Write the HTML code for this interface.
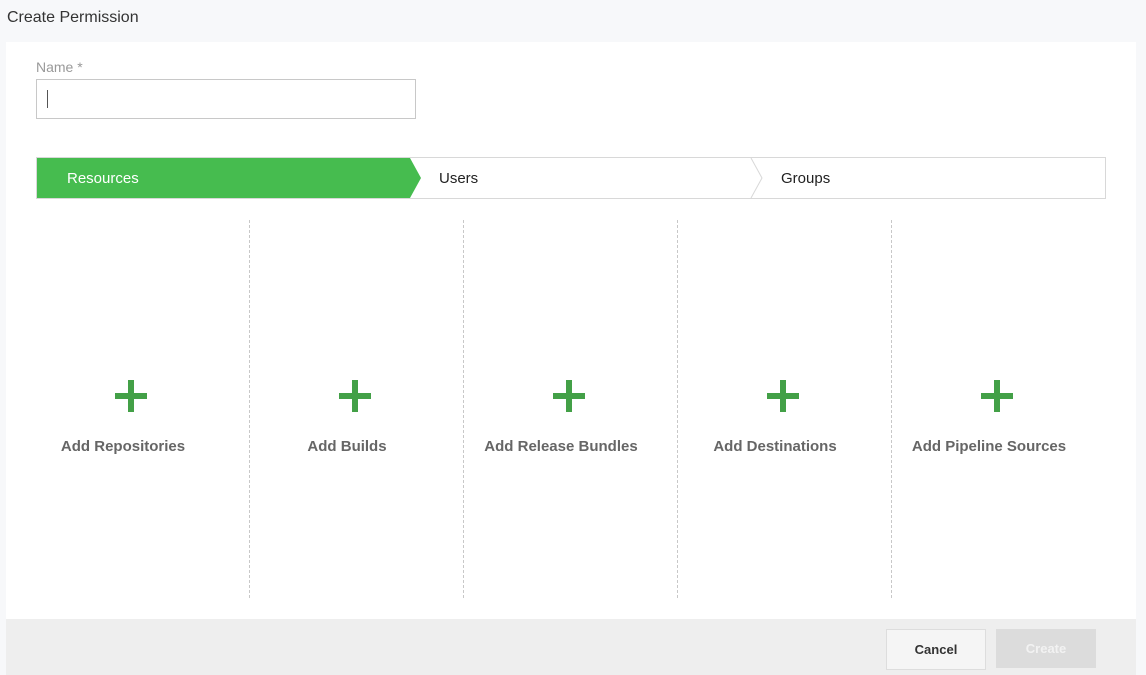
<!DOCTYPE html>
<html><head><style>
body{margin:0;width:1146px;height:675px;background:#f7f8fa;font-family:"Liberation Sans",sans-serif;position:relative;overflow:hidden}
.a{position:absolute}
.title{left:7px;top:9px;font-size:16px;color:#333}
.panel{left:6px;top:42px;width:1130px;height:633px;background:#fff}
.footer{left:6px;top:619px;width:1130px;height:56px;background:#eeeeee}
.lbl{left:36px;top:59px;font-size:14px;color:#999}
.inp{left:36px;top:79px;width:378px;height:38px;border:1px solid #c8c8c8}
.cur{left:47px;top:90px;width:1px;height:18px;background:#555}
.tabs{left:36px;top:157px;width:1068px;height:40px;border:1px solid #d8d8d8;background:#fff}
.tab{font-size:15px;top:170px}
.div{top:220px;height:378px;border-left:1px dashed #c8c8c8;width:0}
.plus{width:32px;height:32px;top:380px}
.plus:before,.plus:after{content:"";position:absolute;background:#43a047}
.plus:before{left:13px;top:0;width:6px;height:32px}
.plus:after{left:0;top:13px;width:32px;height:6px}
.add{top:438px;font-size:15px;color:#666;font-weight:bold;width:214px;text-align:center}
.btn{top:629px;height:39px;width:98px;font-size:13px;font-weight:bold;text-align:center;line-height:39px}
</style></head><body>
<div class="a title">Create Permission</div>
<div class="a panel"></div>
<div class="a footer"></div>
<div class="a lbl">Name *</div>
<div class="a inp"></div>
<div class="a cur"></div>
<div class="a tabs"></div>
<svg class="a" style="left:36px;top:157px" width="1070" height="42">
<polygon points="1,1 374,1 385,21 374,41 1,41" fill="#46bc4f"/>
<polyline points="715,1 726,21 715,41" fill="none" stroke="#d8d8d8"/>
</svg>
<div class="a tab" style="left:67px;color:#fff">Resources</div>
<div class="a tab" style="left:439px;color:#222">Users</div>
<div class="a tab" style="left:781px;color:#222">Groups</div>
<div class="a div" style="left:249px"></div>
<div class="a div" style="left:463px"></div>
<div class="a div" style="left:677px"></div>
<div class="a div" style="left:891px"></div>
<div class="a plus" style="left:115px"></div>
<div class="a plus" style="left:339px"></div>
<div class="a plus" style="left:553px"></div>
<div class="a plus" style="left:767px"></div>
<div class="a plus" style="left:981px"></div>
<div class="a add" style="left:16px">Add Repositories</div>
<div class="a add" style="left:240px">Add Builds</div>
<div class="a add" style="left:454px">Add Release Bundles</div>
<div class="a add" style="left:668px">Add Destinations</div>
<div class="a add" style="left:882px">Add Pipeline Sources</div>
<div class="a btn" style="left:886px;background:#f5f5f5;border:1px solid #ddd;color:#333">Cancel</div>
<div class="a btn" style="left:996px;width:100px;background:#dcdcdc;color:#f2f2f2">Create</div>
</body></html>
